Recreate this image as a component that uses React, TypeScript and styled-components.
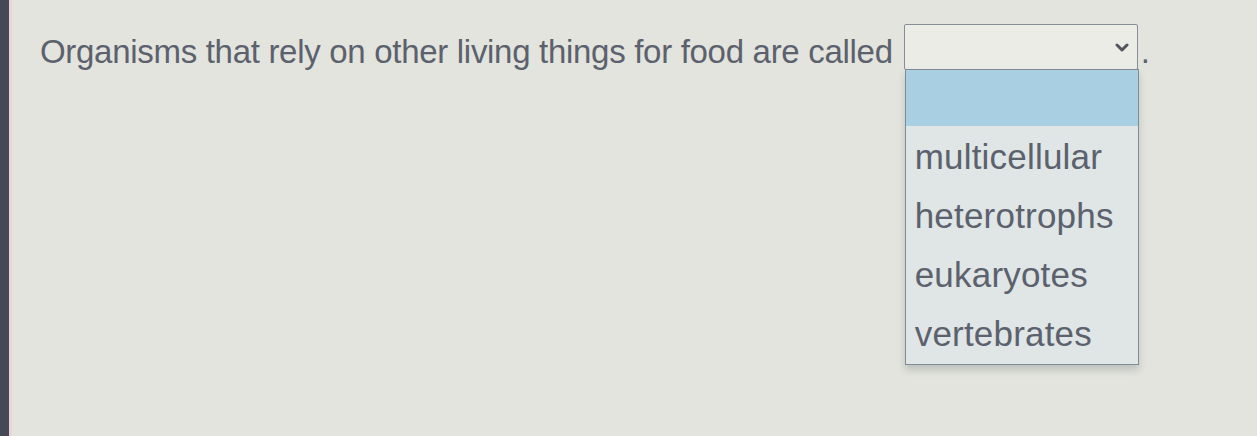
import React from "react";
import styled, { createGlobalStyle } from "styled-components";

const GlobalStyle = createGlobalStyle`
  html, body {
    margin: 0;
    padding: 0;
    background-color: #e3e4dd;
  }
`;

const Page = styled.div`
  width: 1257px;
  height: 436px;
  box-sizing: border-box;
  border-left: 9px solid #454956;
  box-shadow: inset 3px 0 0 #ead3d6;
  background-color: #e3e4dd;
  font-family: "Liberation Sans", Arial, sans-serif;
  color: #5b616d;
  overflow: hidden;
`;

const QuestionRow = styled.div`
  display: flex;
  align-items: flex-start;
  padding: 24px 0 0 31px;
`;

const Prompt = styled.span`
  font-size: 33px;
  line-height: 56px;
  letter-spacing: -0.3px;
  white-space: nowrap;
`;

const SelectWrap = styled.div`
  position: relative;
  margin-left: 11px;
  width: 234px;
`;

const SelectBox = styled.div`
  height: 46px;
  box-sizing: border-box;
  border: 1px solid #878d94;
  border-radius: 2px;
  background-color: #ebece6;
  display: flex;
  align-items: center;
  justify-content: flex-end;
  padding-right: 8px;
`;

const Chevron = () => (
  <svg width="14" height="9" viewBox="0 0 14 9">
    <polyline
      points="2,2 7,7 12,2"
      fill="none"
      stroke="#50555e"
      strokeWidth="3"
      strokeLinecap="round"
      strokeLinejoin="round"
    />
  </svg>
);

const Period = styled.span`
  font-size: 33px;
  line-height: 56px;
  margin-left: 3px;
`;

const Menu = styled.ul`
  position: absolute;
  top: 45px;
  left: 1px;
  width: 234px;
  margin: 0;
  padding: 0 0 2px;
  list-style: none;
  box-sizing: border-box;
  border: 1px solid #7f8c98;
  background-color: #e0e5e5;
  box-shadow: 0 5px 7px rgba(60, 70, 80, 0.22);
`;

const Option = styled.li<{ $active?: boolean }>`
  height: ${(p) => (p.$active ? "56px" : "59px")};
  line-height: 62px;
  padding-left: 9px;
  font-size: 35px;
  letter-spacing: 0.2px;
  color: #5b616d;
  background-color: ${(p) => (p.$active ? "#a9cfe2" : "transparent")};
  white-space: nowrap;
`;

const options = ["multicellular", "heterotrophs", "eukaryotes", "vertebrates"];

export default function App() {
  return (
    <>
      <GlobalStyle />
      <Page>
        <QuestionRow>
          <Prompt>Organisms that rely on other living things for food are called</Prompt>
          <SelectWrap>
            <SelectBox>
              <Chevron />
            </SelectBox>
            <Menu>
              <Option $active />
              {options.map((o) => (
                <Option key={o}>{o}</Option>
              ))}
            </Menu>
          </SelectWrap>
          <Period>.</Period>
        </QuestionRow>
      </Page>
    </>
  );
}
